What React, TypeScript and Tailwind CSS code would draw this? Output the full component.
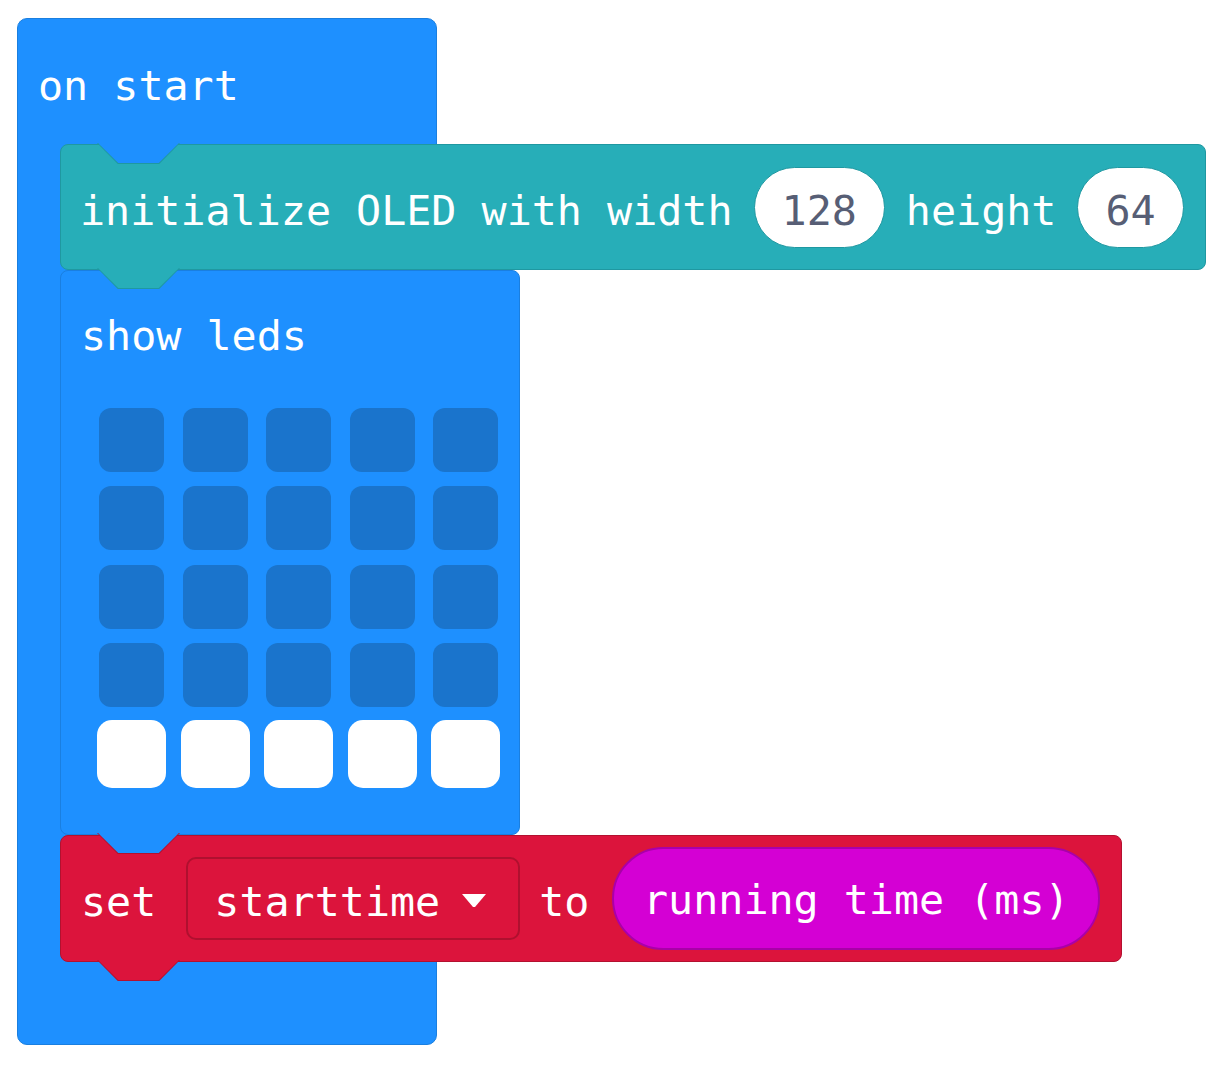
import React from 'react'

const mono = "font-['DejaVu_Sans_Mono',monospace] text-[41.7px] leading-[48px] whitespace-pre"

const Tab: React.FC<{ edge: string; fill: string; pos: string }> = ({ edge, fill, pos }) => (
  <div className={`absolute top-[calc(100%-1px)] z-10 w-[83px] h-[21px] [clip-path:polygon(0_0,100%_0,75%_100%,25%_100%)] ${pos} ${edge}`}>
    <div className={`ml-[1px] w-[81px] h-[20px] [clip-path:polygon(0_0,100%_0,75%_100%,25%_100%)] ${fill}`} />
  </div>
)

const Led: React.FC<{ on?: boolean }> = ({ on }) =>
  on ? (
    <div className="w-[65px] h-[64px] rounded-[13px] bg-white shadow-[0_0_0_2px_#ffffff]" />
  ) : (
    <div className="w-[65px] h-[64px] rounded-[12px] bg-[#1a74cc]" />
  )

const InitBlock: React.FC = () => (
  <div className="relative w-max h-[126px] flex items-center gap-[21px] pl-[19px] pr-[21px] bg-[#27aeb8] border border-[#1f98a1] rounded-[8px] text-white">
    <span className={`${mono} pt-2`}>initialize OLED with width</span>
    <div className="h-[81px] flex items-center px-[27px] bg-white border border-[#1f98a1] rounded-full text-[#575e75]">
      <span className={`${mono} pt-2`}>128</span>
    </div>
    <span className={`${mono} pt-2`}>height</span>
    <div className="h-[81px] flex items-center px-[27px] bg-white border border-[#1f98a1] rounded-full text-[#575e75]">
      <span className={`${mono} pt-2`}>64</span>
    </div>
    <Tab pos="left-[36px]" edge="bg-[#1f98a1]" fill="bg-[#27aeb8]" />
  </div>
)

const ShowLeds: React.FC = () => {
  const rows = [false, false, false, false, true]
  return (
    <div className="relative w-[460px] pl-[20px] pt-[40.5px] pb-[48.4px] bg-[#1e90ff] border border-[#1a7fe0] rounded-[8px] text-white">
      <div className={mono}>show leds</div>
      <div className="mt-[48.5px] ml-[18px] grid grid-cols-[repeat(5,65px)] gap-x-[18.6px] gap-y-[14.4px]">
        {rows.map((on, r) =>
          [0, 1, 2, 3, 4].map(c => <Led key={`${r}-${c}`} on={on} />)
        )}
      </div>
      <Tab pos="left-[36px]" edge="bg-[#b3112f]" fill="bg-[#1e90ff]" />
    </div>
  )
}

const SetBlock: React.FC = () => (
  <div className="relative w-max h-[127px] flex items-center pl-[20px] pr-[21px] bg-[#dc143c] border border-[#b3112f] rounded-[8px] text-white">
    <span className={`${mono} pt-2`}>set</span>
    <div className="ml-[30px] h-[83px] flex items-center pl-[26px] pr-[31px] border-2 border-[#b0102f] rounded-[10px]">
      <span className={`${mono} pt-2`}>starttime</span>
      <svg width="26" height="15" viewBox="0 0 26 15" className="ml-[21px] mt-[4px]">
        <polygon points="1,1 25,1 14,14 12,14" fill="#ffffff" />
      </svg>
    </div>
    <span className={`${mono} pt-2 ml-[19px]`}>to</span>
    <div className="ml-[23px] h-[103px] flex items-center px-[28.6px] bg-[#d400d4] border-2 border-[#a900a9] rounded-full">
      <span className={`${mono} pt-1`}>running time (ms)</span>
    </div>
    <Tab pos="left-[36px]" edge="bg-[#b3112f]" fill="bg-[#dc143c]" />
  </div>
)

export default function App() {
  return (
    <div className="min-h-screen bg-white pl-[17px] pt-[18px]">
      <div className="relative w-[420px] bg-[#1e90ff] border border-[#1a7fe0] rounded-[10px] text-white">
        <div className="relative h-[125px] pl-[20px] pt-[42.5px]">
          <div className={mono}>on start</div>
          <Tab pos="left-[79px]" edge="bg-[#1f98a1]" fill="bg-[#1e90ff]" />
        </div>
        <div className="ml-[42px] flex flex-col items-start">
          <InitBlock />
          <ShowLeds />
          <SetBlock />
        </div>
        <div className="h-[82px]" />
      </div>
    </div>
  )
}
